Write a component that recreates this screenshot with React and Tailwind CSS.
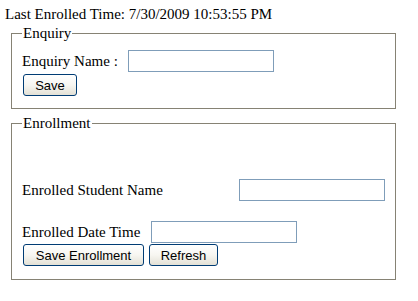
export default function App() {
  const serif = { fontFamily: '"Liberation Serif", "Times New Roman", serif' };
  const btn =
    "h-[22px] box-border border border-[#003c74] rounded-[3px] bg-gradient-to-b from-[#ffffff] via-[#f7f6f1] to-[#e3e1d6] text-black text-[13px] leading-none font-['Liberation_Sans',Arial,sans-serif] flex items-center justify-center";
  const input = "h-[22px] w-[146px] box-border border border-[#7f9db9] bg-white";
  return (
    <div className="w-[418px] h-[301px] bg-white text-black text-[15px]" style={serif}>
      <div className="pt-[5px] pl-[5px] h-[23px] leading-[18px]">
        Last Enrolled Time: 7/30/2009 10:53:55 PM
      </div>

      <fieldset className="mt-[1px] ml-[11px] w-[385px] border border-[#868274] pl-[10px] pr-[10px] pt-[8px] pb-[12px]">
        <legend className="px-[1px] leading-[18px]">Enquiry</legend>
        <div className="flex items-center h-[22px]">
          <span className="w-[106px] leading-[18px]">Enquiry Name :</span>
          <div className={input}></div>
        </div>
        <div className="mt-[2px] ml-[1px] flex">
          <button className={btn + " w-[54px]"}>Save</button>
        </div>
      </fieldset>

      <fieldset className="mt-[5px] ml-[11px] w-[385px] border border-[#868274] pl-[10px] pr-[10px] pt-[47px] pb-[13px]">
        <legend className="px-[1px] leading-[18px]">Enrollment</legend>
        <div className="flex items-center h-[22px]">
          <span className="w-[217px] leading-[18px]">Enrolled Student Name</span>
          <div className={input}></div>
        </div>
        <div className="mt-[20px] flex items-center h-[22px]">
          <span className="w-[129px] leading-[18px]">Enrolled Date Time</span>
          <div className={input}></div>
        </div>
        <div className="mt-[1px] ml-[1px] flex gap-[5px]">
          <button className={btn + " w-[121px]"}>Save Enrollment</button>
          <button className={btn + " w-[69px]"}>Refresh</button>
        </div>
      </fieldset>
    </div>
  );
}
